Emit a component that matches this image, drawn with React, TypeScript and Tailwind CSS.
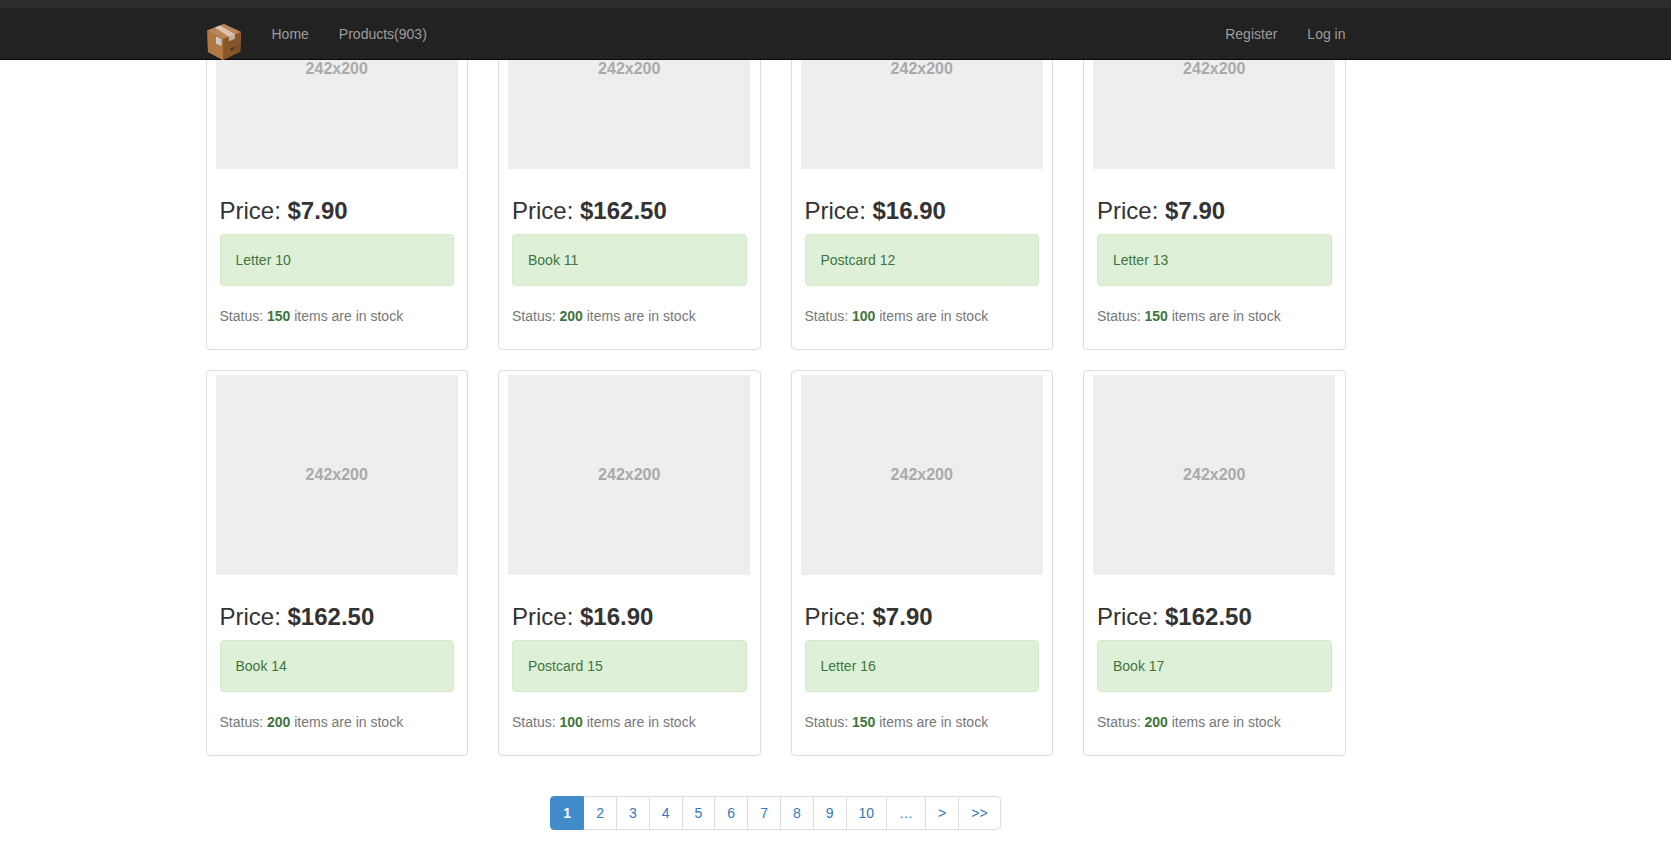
import React from "react";

type Product = { id: number; name: string; price: string; stock: number };

const products: Product[] = [
  { id: 10, name: "Letter 10", price: "$7.90", stock: 150 },
  { id: 11, name: "Book 11", price: "$162.50", stock: 200 },
  { id: 12, name: "Postcard 12", price: "$16.90", stock: 100 },
  { id: 13, name: "Letter 13", price: "$7.90", stock: 150 },
  { id: 14, name: "Book 14", price: "$162.50", stock: 200 },
  { id: 15, name: "Postcard 15", price: "$16.90", stock: 100 },
  { id: 16, name: "Letter 16", price: "$7.90", stock: 150 },
  { id: 17, name: "Book 17", price: "$162.50", stock: 200 },
];

const pages = ["1", "2", "3", "4", "5", "6", "7", "8", "9", "10", "…", ">", ">>"];

function BoxLogo() {
  return (
    <svg viewBox="0 0 36 36" className="h-9 w-9" aria-hidden="true">
      <path d="M1.3 6.6 L18 0 L35 8 L34.2 27.5 L17 36 L2 28 Z" fill="#a87342" />
      <path d="M1.3 6.6 L18 0 L35 8 L17.2 15 Z" fill="#b98458" />
      <path d="M1.3 6.6 L17.2 15 L17 36 L2 28 Z" fill="#b07845" />
      <path d="M35 8 L17.2 15 L17 36 L34.2 27.5 Z" fill="#865629" />
      <path d="M8.8 3.6 L14.2 1.5 L29 10.3 L22.8 12.8 Z" fill="#dcc5b0" />
      <path d="M22.8 12.8 L29 10.3 L29 14.8 L22.8 17.2 Z" fill="#c8b29c" />
      <path d="M10 12.6 L15.4 15.2 L15.4 22 L10 19.4 Z" fill="#cfcfcb" />
      <path d="M10.8 15.4 L14.6 17.3 M10.8 17.4 L14.6 19.3" stroke="#adadaa" strokeWidth=".5" />
      <path d="M24 24.6 L28.6 22.6 L27.8 25.2 L26.6 26 V27.6 L25.8 28 V26.4 L24.6 26.4 Z" fill="#57371a" />
      <path d="M30 22 V26 M32.6 20.9 V24.9 M29.6 27 L33 25.5" stroke="#68421f" strokeWidth=".7" fill="none" />
    </svg>
  );
}

function NavLink({ children }: { children: React.ReactNode }) {
  return (
    <a href="#" className="block px-[15px] py-[15px] text-[#9d9d9d] hover:text-white">
      {children}
    </a>
  );
}

function ProductCard({ product }: { product: Product }) {
  return (
    <article className="rounded-[4px] border border-[#ddd] p-1">
      <div
        role="img"
        aria-label="242x200"
        className="mx-auto flex h-[200px] max-w-[242px] items-center justify-center bg-[#eee] text-base font-bold text-[#aaa]"
      >
        242x200
      </div>
      <div className="p-[9px] text-[#777]">
        <h3 className="mt-5 mb-2.5 text-2xl/[26px] font-medium text-[#333]">
          <span className="font-normal">Price: </span>
          <strong className="font-bold">{product.price}</strong>
        </h3>
        <div className="mb-5 rounded-[4px] border border-[#d6e9c6] bg-[#dff0d8] p-[15px] text-[#3c763d]">
          {product.name}
        </div>
        <p className="mb-2.5">
          Status: <strong className="text-[#3c763d]">{product.stock}</strong> items are in stock
        </p>
      </div>
    </article>
  );
}

export default function App() {
  return (
    <div className="bg-white font-['Liberation_Sans',Arial,sans-serif] text-sm/5 text-[#333]">
      <header className="fixed inset-x-0 top-0 z-10 border-b border-[#080808] bg-[#222]">
        <div className="h-2 bg-[#2d2d2d]" />
        <div className="pt-px pr-[120px]">
          <nav className="mx-auto flex h-[50px] max-w-[1140px]">
            <a href="#" aria-label="Store" className="mr-[15px] pt-[15px]">
              <BoxLogo />
            </a>
            <NavLink>Home</NavLink>
            <NavLink>Products(903)</NavLink>
            <div className="-mr-[15px] ml-auto flex">
              <NavLink>Register</NavLink>
              <NavLink>Log in</NavLink>
            </div>
          </nav>
        </div>
      </header>

      <main className="-mt-9 pr-[120px]">
        <div className="mx-auto max-w-[1140px]">
          <div className="grid grid-cols-4 gap-x-[30px] gap-y-5">
            {products.map((product) => (
              <ProductCard key={product.id} product={product} />
            ))}
          </div>
          <nav aria-label="Pagination" className="mt-10 flex justify-center">
            <ul className="flex">
              {pages.map((page, index) => (
                <li key={page} className="group">
                  <a
                    href="#"
                    aria-current={index === 0 ? "page" : undefined}
                    className={
                      index === 0
                        ? "block rounded-l-[4px] border border-[#428bca] bg-[#428bca] px-3 py-1.5 font-bold text-white"
                        : "-ml-px block border border-[#ddd] px-3 py-1.5 text-[#337ab7] group-nth-2:border-l-[#428bca] group-last:rounded-r-[4px]"
                    }
                  >
                    {page}
                  </a>
                </li>
              ))}
            </ul>
          </nav>
        </div>
      </main>
    </div>
  );
}
